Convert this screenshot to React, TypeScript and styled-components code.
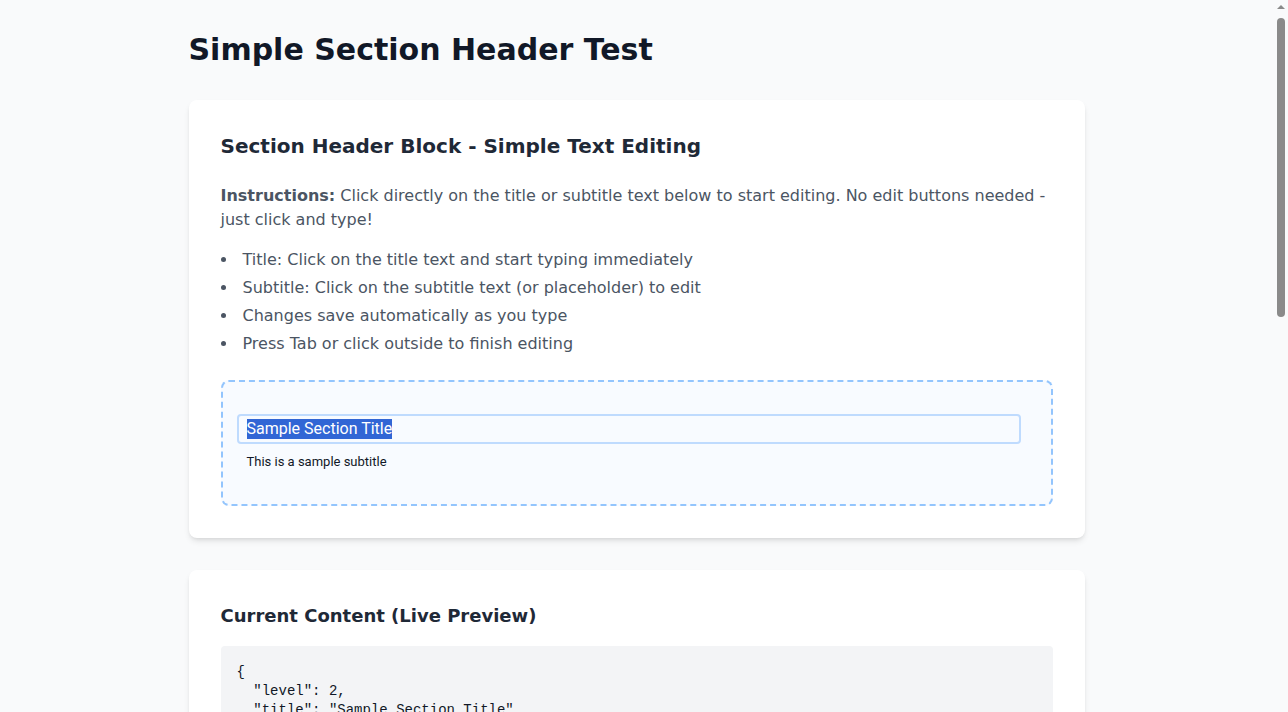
import React from "react";
import styled, { createGlobalStyle } from "styled-components";

const Global = createGlobalStyle`
  html, body { margin: 0; padding: 0; }
  body {
    background: #f9fafb;
    font-family: "DejaVu Sans", "Noto Sans", sans-serif;
    color: #111827;
  }
  * { box-sizing: border-box; }
`;

const Page = styled.div`
  min-height: 100vh;
  padding: 32px 47px 32px 32px;
`;

const Container = styled.div`
  max-width: 896px;
  margin: 0 auto;
`;

const PageTitle = styled.h1`
  margin: 0 0 32px;
  font-size: 30px;
  line-height: 36px;
  font-weight: 700;
  color: #111827;
`;

const Card = styled.section`
  background: #ffffff;
  border-radius: 8px;
  box-shadow: 0 4px 6px -1px rgba(0, 0, 0, 0.1), 0 2px 4px -2px rgba(0, 0, 0, 0.1);
  padding: 32px;
  margin-bottom: 32px;
`;

const CardTitle = styled.h2<{ $mb: number; $size: number }>`
  margin: 0 0 ${(p) => p.$mb}px;
  font-size: ${(p) => p.$size}px;
  line-height: 28px;
  font-weight: 700;
  color: #1f2937;
`;

const Text = styled.p`
  margin: 0 0 16px;
  font-size: 16px;
  line-height: 24px;
  color: #4b5563;
  strong { font-weight: 700; }
`;

const List = styled.ul`
  margin: 0 0 24px;
  padding-left: 0;
  list-style: disc inside;
  color: #4b5563;
  font-size: 16px;
  line-height: 24px;
  li + li { margin-top: 4px; }
`;

const EditorBox = styled.div`
  border: 2px dashed #93c5fd;
  border-radius: 8px;
  background: #f8fbff;
  padding: 32px 30px 32px 14px;
`;

const TitleField = styled.div`
  height: 30px;
  border: 2px solid #bfdbfe;
  border-radius: 4px;
  padding: 0 8px;
  display: flex;
  align-items: center;
  font-family: Roboto, "Liberation Sans", sans-serif;
  font-size: 16px;
  color: #111827;
`;

const Selected = styled.span`
  background: #3166d5;
  color: #ffffff;
  line-height: 20px;
`;

const Subtitle = styled.div`
  margin-top: 8px;
  padding: 0 10px;
  font-family: Roboto, "Liberation Sans", sans-serif;
  font-size: 13px;
  line-height: 20px;
  color: #111827;
`;

const Code = styled.pre`
  margin: 0;
  background: #f3f4f6;
  border-radius: 4px;
  padding: 17px 16px 16px;
  font-family: "Liberation Mono", monospace;
  font-size: 14px;
  line-height: 19px;
  color: #111827;
  white-space: pre;
`;

const ScrollTrack = styled.div`
  position: fixed;
  top: 0;
  right: 0;
  width: 15px;
  height: 100vh;
  background: #f9fafb;
  display: flex;
  flex-direction: column;
  align-items: center;
`;

const ScrollArrow = styled.div`
  margin-top: 5px;
  width: 0;
  height: 0;
  border-left: 4px solid transparent;
  border-right: 4px solid transparent;
  border-bottom: 4px solid #8a8a8a;
`;

const ScrollThumb = styled.div`
  margin-top: 9px;
  width: 8px;
  height: 299px;
  border-radius: 4px;
  background: #8a8a8a;
`;

const json = `{
  "level": 2,
  "title": "Sample Section Title",
  "subtitle": "This is a sample subtitle",
  "alignment": "left",
  "showDivider": false
}`;

export default function App() {
  return (
    <>
      <Global />
      <Page>
        <Container>
          <PageTitle>Simple Section Header Test</PageTitle>
          <Card>
            <CardTitle $mb={24} $size={20}>
              Section Header Block - Simple Text Editing
            </CardTitle>
            <Text>
              <strong>Instructions:</strong> Click directly on the title or subtitle text below to start
              editing. No edit buttons needed - just click and type!
            </Text>
            <List>
              <li>Title: Click on the title text and start typing immediately</li>
              <li>Subtitle: Click on the subtitle text (or placeholder) to edit</li>
              <li>Changes save automatically as you type</li>
              <li>Press Tab or click outside to finish editing</li>
            </List>
            <EditorBox>
              <TitleField>
                <Selected>Sample Section Title</Selected>
              </TitleField>
              <Subtitle>This is a sample subtitle</Subtitle>
            </EditorBox>
          </Card>
          <Card>
            <CardTitle $mb={16} $size={18}>
              Current Content (Live Preview)
            </CardTitle>
            <Code>{json}</Code>
          </Card>
          <Card>
            <CardTitle $mb={16} $size={18}>
              Test Notes
            </CardTitle>
            <List>
              <li>The title field receives focus when clicked</li>
              <li>The subtitle field shows a placeholder when empty</li>
              <li>The preview above updates on every keystroke</li>
              <li>Empty titles fall back to the default text</li>
              <li>Header level is preserved while editing</li>
              <li>Styling matches the rendered block on the page</li>
              <li>Keyboard navigation works between both fields</li>
              <li>Undo and redo are handled by the browser</li>
            </List>
          </Card>
        </Container>
      </Page>
      <ScrollTrack aria-hidden="true">
        <ScrollArrow />
        <ScrollThumb />
      </ScrollTrack>
    </>
  );
}
